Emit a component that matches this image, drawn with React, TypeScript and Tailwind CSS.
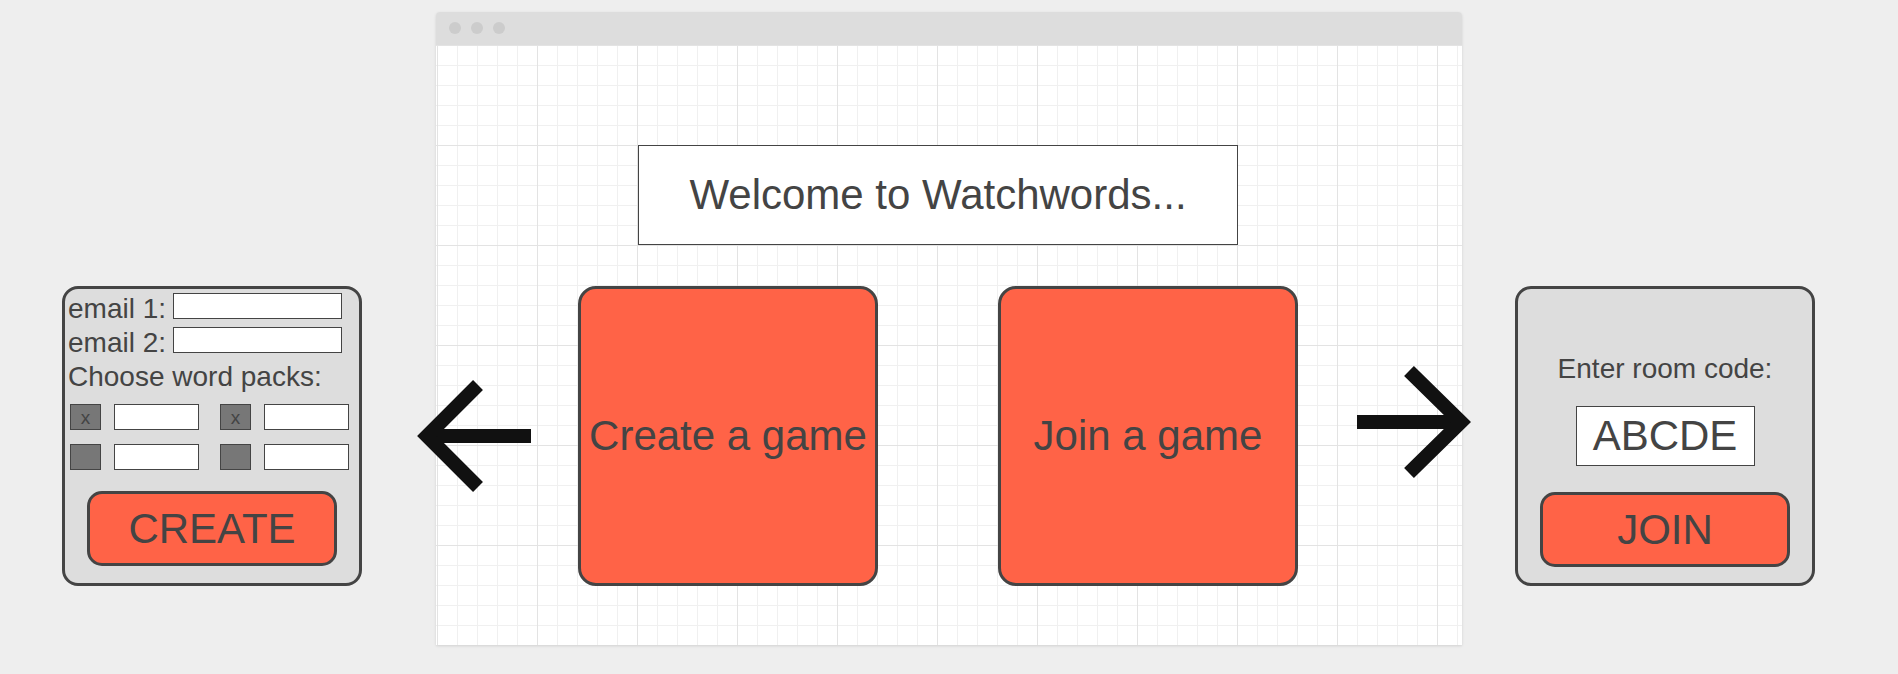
import React from 'react';

const font = "font-['Liberation_Sans',Arial,sans-serif]";

function PackRow({ checked }: { checked: boolean }) {
  return (
    <div className="flex h-[26px] items-center pl-[5px]">
      <div className="flex h-[26px] w-[31px] items-center justify-center border border-[#444] bg-[#777] text-[19px] leading-none text-[#444]">
        {checked ? 'x' : ''}
      </div>
      <div className="ml-[13px] h-[26px] w-[85px] border border-[#444] bg-white" />
      <div className="ml-[21px] flex h-[26px] w-[31px] items-center justify-center border border-[#444] bg-[#777] text-[19px] leading-none text-[#444]">
        {checked ? 'x' : ''}
      </div>
      <div className="ml-[13px] h-[26px] w-[85px] border border-[#444] bg-white" />
    </div>
  );
}

function CreatePanel() {
  return (
    <div className="flex h-[300px] w-[300px] shrink-0 flex-col rounded-[16px] border-[3px] border-[#444] bg-[#dddddd] pt-[4px] text-[28px] leading-[32px] text-[#444]">
      <div className="flex h-[32px] items-start pl-[3px]">
        <span className="whitespace-nowrap">email 1:</span>
        <div className="ml-[7px] mt-[0px] h-[26px] w-[169px] border border-[#444] bg-white" />
      </div>
      <div className="mt-[2px] flex h-[32px] items-start pl-[3px]">
        <span className="whitespace-nowrap">email 2:</span>
        <div className="ml-[7px] mt-[0px] h-[26px] w-[169px] border border-[#444] bg-white" />
      </div>
      <div className="mt-[2px] h-[32px] whitespace-nowrap pl-[3px]">Choose word packs:</div>
      <div className="mt-[11px] flex flex-col gap-[14px]">
        <PackRow checked />
        <PackRow checked={false} />
      </div>
      <div className="mx-auto mt-[21px] flex h-[75px] w-[250px] items-center justify-center rounded-[15px] border-[3px] border-[#444] bg-[#ff6347] text-[42px] leading-none">
        CREATE
      </div>
    </div>
  );
}

function JoinPanel() {
  return (
    <div className="flex h-[300px] w-[300px] shrink-0 flex-col items-center rounded-[16px] border-[3px] border-[#444] bg-[#dddddd] pt-[64px] text-[#444]">
      <div className="h-[32px] whitespace-nowrap text-[28px] leading-[32px]">Enter room code:</div>
      <div className="mt-[21px] flex h-[60px] w-[179px] items-center justify-center border border-[#444] bg-white text-[42px] leading-none">
        ABCDE
      </div>
      <div className="mt-[26px] flex h-[75px] w-[250px] items-center justify-center rounded-[15px] border-[3px] border-[#444] bg-[#ff6347] text-[42px] leading-none">
        JOIN
      </div>
    </div>
  );
}

function GameBox({ label }: { label: string }) {
  return (
    <div className="flex h-[300px] w-[300px] shrink-0 items-center justify-center rounded-[18px] border-[3px] border-[#444] bg-[#ff6347] text-[42px] leading-none whitespace-nowrap text-[#444]">
      {label}
    </div>
  );
}

function LeftArrow() {
  return (
    <svg width="114" height="300" viewBox="0 0 114 300" className="shrink-0">
      <rect x="12" y="143" width="102" height="14" fill="#111" />
      <polyline points="61,99 10,150 61,201" fill="none" stroke="#111" strokeWidth="14" strokeLinejoin="miter" strokeMiterlimit="4" />
    </svg>
  );
}

function RightArrow() {
  return (
    <svg width="114" height="300" viewBox="0 0 114 300" className="shrink-0">
      <rect x="0" y="129" width="102" height="14" fill="#111" />
      <polyline points="52,85 104,136 52,187" fill="none" stroke="#111" strokeWidth="14" strokeLinejoin="miter" strokeMiterlimit="4" />
    </svg>
  );
}

export default function App() {
  return (
    <div className={`relative h-[674px] w-full overflow-hidden bg-[#eeeeee] pt-[12px] ${font}`}>
      {/* mockup browser window */}
      <div className="mx-auto flex h-[633px] w-[1026px] flex-col rounded-t-[4px] shadow-[0_1px_3px_rgba(0,0,0,0.12)]">
        <div className="flex h-[33px] shrink-0 items-start gap-[10px] rounded-t-[4px] bg-[#dddddd] pl-[13px] pt-[10px]">
          <span className="h-[12px] w-[12px] rounded-full bg-[#cccccc]" />
          <span className="h-[12px] w-[12px] rounded-full bg-[#cccccc]" />
          <span className="h-[12px] w-[12px] rounded-full bg-[#cccccc]" />
        </div>
        <div className="flex-1 bg-white bg-[linear-gradient(to_right,#e3e3e3_1px,transparent_1px),linear-gradient(to_bottom,#e3e3e3_1px,transparent_1px),linear-gradient(to_right,#f0f0f0_1px,transparent_1px),linear-gradient(to_bottom,#f0f0f0_1px,transparent_1px)] bg-[length:100px_100px,100px_100px,20px_20px,20px_20px] bg-[position:1px_0]">
          <div className="ml-[202px] mt-[100px] flex h-[100px] w-[600px] items-center justify-center border border-[#444] bg-white text-[42px] leading-none text-[#444]">
            Welcome to Watchwords...
          </div>
        </div>
      </div>

      {/* flow of screens laid over the window */}
      <div className="absolute left-[62px] top-[286px] flex items-start">
        <CreatePanel />
        <div className="ml-[55px]">
          <LeftArrow />
        </div>
        <div className="ml-[47px]">
          <GameBox label="Create a game" />
        </div>
        <div className="ml-[120px]">
          <GameBox label="Join a game" />
        </div>
        <div className="ml-[59px]">
          <RightArrow />
        </div>
        <div className="ml-[44px]">
          <JoinPanel />
        </div>
      </div>
    </div>
  );
}
